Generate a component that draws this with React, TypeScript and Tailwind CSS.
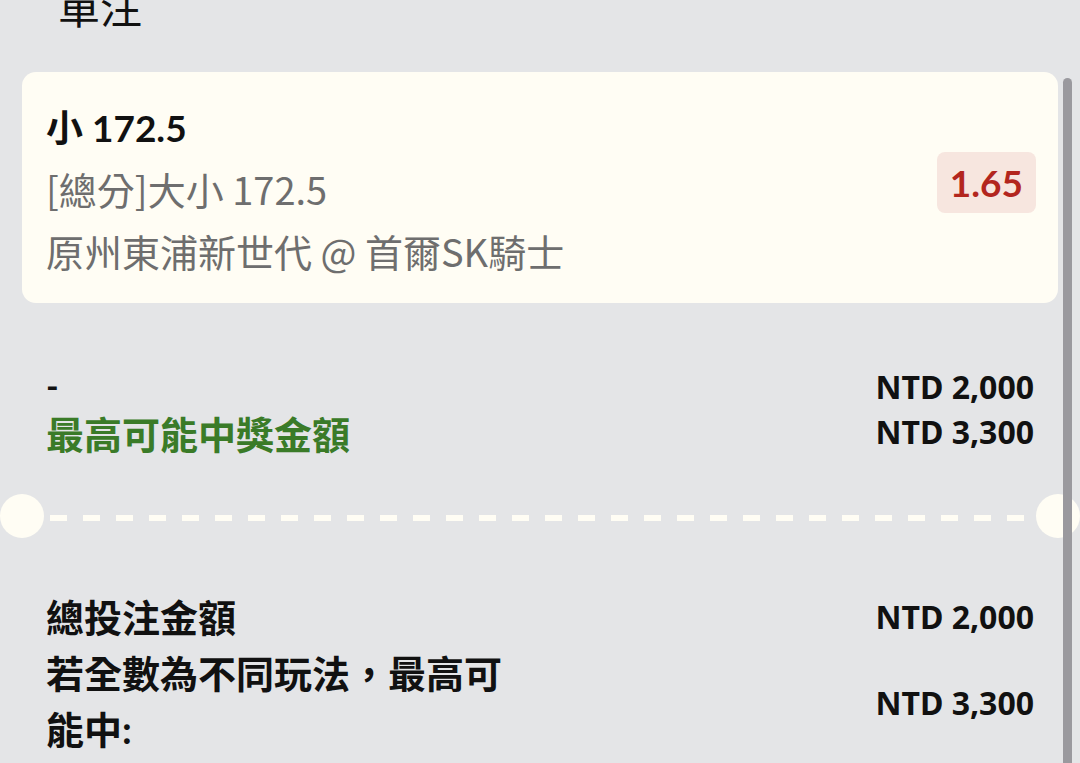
export default function App() {
  return (
    <div className="relative h-[763px] overflow-hidden bg-[#e4e5e7] font-['Lato','Noto_Sans_CJK_TC',sans-serif] text-[#111]">
      <div className="px-[22px]">
        {/* title, cut off by the top of the viewport */}
        <div className="-mt-[13px] pl-[36px] text-[42px] leading-none">單注</div>

        {/* selection card */}
        <div className="mt-[43px] flex items-start justify-between rounded-[14px] bg-[#fffdf4] pl-[24px] pr-[22px] pt-[24px] pb-[21px]">
          <div className="leading-[63px]">
            <div className="text-[37px] font-bold">小 172.5</div>
            <div className="-mt-[2px] font-['Noto_Sans_CJK_TC',sans-serif] text-[38px] text-[#6e6e6e]">
              [總分]大小 172.5
            </div>
            <div className="-mt-[1px] font-['Noto_Sans_CJK_TC',sans-serif] text-[38px] text-[#6e6e6e]">
              原州東浦新世代 @ 首爾SK騎士
            </div>
          </div>
          <div className="mt-[56px] rounded-[8px] bg-[#f7e6df] px-[13px] py-[7px] text-[37px] font-bold leading-[47px] text-[#b3261e]">
            1.65
          </div>
        </div>

        {/* stake / potential win */}
        <div className="mt-[59px] flex justify-between px-[24px]">
          <div>
            <div className="text-[34px] font-bold leading-[47px]">-</div>
            <div className="text-[38px] font-bold leading-[50px] text-[#3a7b28]">最高可能中獎金額</div>
          </div>
          <div className="pt-[2px] text-right font-['Noto_Sans',sans-serif] text-[32px] font-bold leading-[45px]">
            <div>NTD 2,000</div>
            <div>NTD 3,300</div>
          </div>
        </div>
      </div>

      {/* ticket divider */}
      <div className="mt-[35px] flex h-[44px] items-center justify-between">
        <div className="h-[44px] w-[44px] rounded-full bg-[#fffdf4]" />
        <div className="mx-[6px] mt-[4px] h-[6px] flex-1 bg-[repeating-linear-gradient(90deg,#fffdf4_0_17px,transparent_17px_33px)]" />
        <div className="h-[44px] w-[44px] rounded-full bg-[#fffdf4]" />
      </div>

      {/* totals */}
      <div className="mt-[51px] px-[46px]">
        <div className="flex items-center justify-between">
          <div className="w-[470px] text-[38px] font-bold leading-[56px]">總投注金額</div>
          <div className="font-['Noto_Sans',sans-serif] text-[32px] font-bold">NTD 2,000</div>
        </div>
        <div className="flex items-center justify-between">
          <div className="w-[470px] text-[38px] font-bold leading-[56px]">若全數為不同玩法，最高可能中:</div>
          <div className="mt-[4px] font-['Noto_Sans',sans-serif] text-[32px] font-bold">NTD 3,300</div>
        </div>
      </div>

      {/* scrollbar */}
      <div className="absolute right-[8px] top-[78px] bottom-0 w-[9px] rounded-t-full bg-[#9a999e]" />
    </div>
  );
}
